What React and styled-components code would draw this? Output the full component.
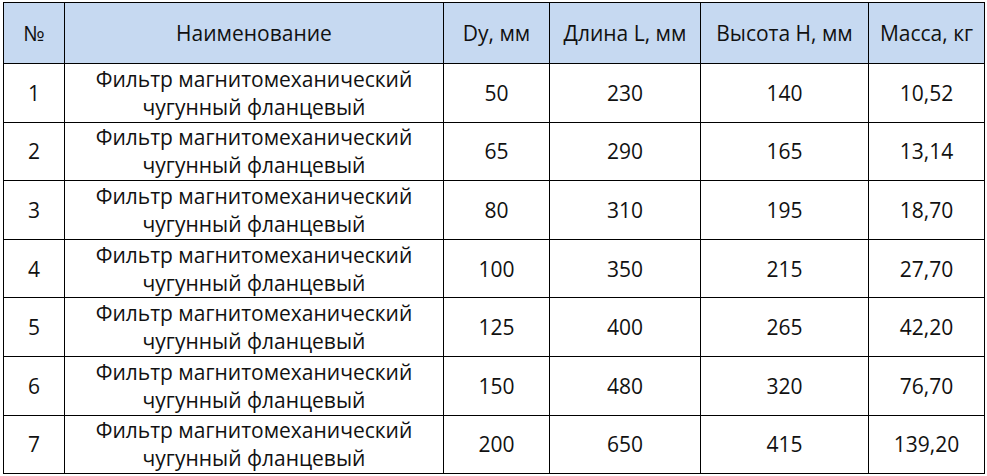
import React from 'react';
import styled, { createGlobalStyle } from 'styled-components';

const GlobalStyle = createGlobalStyle`
  body {
    margin: 0;
    background: #ffffff;
    font-family: 'Open Sans', 'Liberation Sans', sans-serif;
  }
`;

const Wrapper = styled.div`
  padding: 2px 0 0 3px;
`;

const Table = styled.table`
  width: 981px;
  border-collapse: collapse;
  table-layout: fixed;
  color: #111;
  font-size: 21px;
`;

const HeadCell = styled.th`
  height: 60px;
  padding: 0;
  font-weight: 400;
  text-align: center;
  background-color: #c6d9f1;
  border: 1.5px solid #000;
`;

const Cell = styled.td`
  height: 57.6px;
  padding: 0;
  text-align: center;
  vertical-align: middle;
  line-height: 28px;
  border: 1.5px solid #000;
`;

const columns = [
  { title: '№', width: 61 },
  { title: 'Наименование', width: 379 },
  { title: 'Dy, мм', width: 106 },
  { title: 'Длина L, мм', width: 151 },
  { title: 'Высота H, мм', width: 168 },
  { title: 'Масса, кг', width: 116 },
];

const rows = [
  [1, 50, 230, 140, '10,52'],
  [2, 65, 290, 165, '13,14'],
  [3, 80, 310, 195, '18,70'],
  [4, 100, 350, 215, '27,70'],
  [5, 125, 400, 265, '42,20'],
  [6, 150, 480, 320, '76,70'],
  [7, 200, 650, 415, '139,20'],
];

const App = () => (
  <Wrapper>
    <GlobalStyle />
    <Table>
      <colgroup>
        {columns.map((c) => (
          <col key={c.title} style={{ width: c.width }} />
        ))}
      </colgroup>
      <thead>
        <tr>
          {columns.map((c) => (
            <HeadCell key={c.title}>{c.title}</HeadCell>
          ))}
        </tr>
      </thead>
      <tbody>
        {rows.map(([n, dy, len, h, mass]) => (
          <tr key={n}>
            <Cell>{n}</Cell>
            <Cell>
              Фильтр магнитомеханический
              <br />
              чугунный фланцевый
            </Cell>
            <Cell>{dy}</Cell>
            <Cell>{len}</Cell>
            <Cell>{h}</Cell>
            <Cell>{mass}</Cell>
          </tr>
        ))}
      </tbody>
    </Table>
  </Wrapper>
);

export default App;
